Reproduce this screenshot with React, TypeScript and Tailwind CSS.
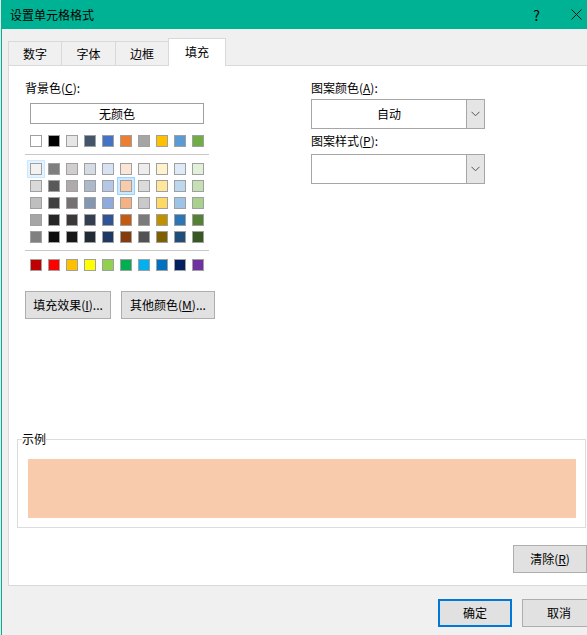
const themeRow = ["#FFFFFF", "#000000", "#E7E6E6", "#44546A", "#4472C4", "#ED7D31", "#A5A5A5", "#FFC000", "#5B9BD5", "#70AD47"];

const shadeRows = [
  ["#F2F2F2", "#7F7F7F", "#D0CECE", "#D6DCE4", "#D9E2F3", "#FBE5D6", "#EDEDED", "#FFF2CC", "#DEEBF7", "#E2F0D9"],
  ["#D9D9D9", "#595959", "#AEAAAA", "#ADB9CA", "#B4C7E7", "#F8CBAD", "#DBDBDB", "#FFE699", "#BDD7EE", "#C5E0B4"],
  ["#BFBFBF", "#404040", "#757171", "#8497B0", "#8FAADC", "#F4B183", "#C9C9C9", "#FFD966", "#9DC3E6", "#A9D18E"],
  ["#A6A6A6", "#262626", "#3B3838", "#333F50", "#2F5597", "#C55A11", "#7B7B7B", "#BF9000", "#2E75B6", "#548235"],
  ["#808080", "#0D0D0D", "#181717", "#222A35", "#203864", "#843C0C", "#525252", "#7F6000", "#1F4E79", "#385723"],
];

const standardRow = ["#C00000", "#FF0000", "#FFC000", "#FFFF00", "#92D050", "#00B050", "#00B0F0", "#0070C0", "#002060", "#7030A0"];

const tabs = [
  { label: "数字", w: "w-[54px]" },
  { label: "字体", w: "w-[55px]" },
  { label: "边框", w: "w-[54px]" },
];

function Swatch({ color, mark }: { color: string; mark?: "hover" | "selected" }) {
  return (
    <div className="relative h-[12px] w-[12px]">
      {mark === "hover" && <div className="absolute -inset-[3px] border border-[#cce8ff] bg-[#e5f3ff]" />}
      {mark === "selected" && <div className="absolute -inset-[3px] border border-[#99d1ff] bg-[#cce8ff]" />}
      <div className="relative h-full w-full border border-[#a0a0a0]" style={{ backgroundColor: color }} />
    </div>
  );
}

function SwatchRow({ colors, row }: { colors: string[]; row?: number }) {
  return (
    <div className="flex gap-[6px]">
      {colors.map((c, i) => (
        <Swatch
          key={i}
          color={c}
          mark={row === 0 && i === 0 ? "hover" : row === 1 && i === 5 ? "selected" : undefined}
        />
      ))}
    </div>
  );
}

function Chevron() {
  return (
    <svg width="9" height="6" viewBox="0 0 9 6" fill="none" stroke="#555" strokeWidth="1">
      <path d="M0.5 0.8L4.5 4.8L8.5 0.8" />
    </svg>
  );
}

function Combo({ value }: { value?: string }) {
  return (
    <div className="flex h-[30px] w-[174px] border border-[#a6a6a6] bg-white">
      <div className="flex flex-1 items-center justify-center">{value}</div>
      <div className="flex w-[18px] items-center justify-center border-l border-[#a6a6a6] bg-[#e5e5e5]">
        <Chevron />
      </div>
    </div>
  );
}

function Btn({ children, w, primary }: { children: React.ReactNode; w: string; primary?: boolean }) {
  return (
    <div
      className={`flex h-[28px] ${w} items-center justify-center bg-[#e1e1e1] ${
        primary ? "border-2 border-[#0078d7]" : "border border-[#adadad]"
      }`}
    >
      {children}
    </div>
  );
}

export default function App() {
  return (
    <div className="flex h-[635px] w-[587px] overflow-hidden bg-[#eeeeee] font-['Noto_Sans_CJK_SC',sans-serif] text-[12px] leading-[16px] text-black">
      <div className="w-px shrink-0 bg-[#e6e6e6]" />
      <div className="flex min-w-0 flex-1 flex-col border-l border-[#00b294] bg-[#f0f0f0]">
        {/* title bar */}
        <div className="flex h-[29px] shrink-0 items-center bg-[#00b294] pl-[8px] pr-[5px]">
          <span>设置单元格格式</span>
          <span className="ml-auto text-[14px]">?</span>
          <svg className="ml-[31px]" width="11" height="11" viewBox="0 0 11 11" stroke="#111" strokeWidth="1">
            <path d="M0.5 0.5L10.5 10.5M10.5 0.5L0.5 10.5" />
          </svg>
        </div>

        {/* tabs */}
        <div className="relative z-10 mt-[9px] -mb-px flex items-end pl-[6px]">
          {tabs.map((t, i) => (
            <div
              key={t.label}
              className={`mb-px flex h-[24px] ${t.w} items-center justify-center border border-b-0 border-[#d9d9d9] bg-[#f0f0f0] ${
                i > 0 ? "-ml-px" : ""
              }`}
            >
              {t.label}
            </div>
          ))}
          <div className="-ml-px flex h-[28px] w-[58px] items-center justify-center border border-b-0 border-[#d9d9d9] bg-white pb-[2px]">
            填充
          </div>
        </div>

        {/* panel */}
        <div className="ml-[6px] flex h-[521px] w-[592px] shrink-0 flex-col border border-[#d9d9d9] bg-white pb-[12px]">
          <div className="flex pt-[14px]">
            <div className="flex w-[302px] flex-col pl-[16px]">
              <div>
                背景色(<span className="underline">C</span>):
              </div>
              <div className="ml-[5px] mt-[7px] flex h-[21px] w-[174px] items-center justify-center border border-[#a0a0a0]">
                无颜色
              </div>
              <div className="ml-[5px] mt-[11px]">
                <SwatchRow colors={themeRow} />
              </div>
              <div className="mt-[7px] h-px w-[184px] bg-[#c8c8c8]" />
              <div className="ml-[5px] mt-[8px] flex flex-col gap-[5px]">
                {shadeRows.map((r, i) => (
                  <SwatchRow key={i} colors={r} row={i} />
                ))}
              </div>
              <div className="mt-[7px] h-px w-[184px] bg-[#c8c8c8]" />
              <div className="ml-[5px] mt-[8px]">
                <SwatchRow colors={standardRow} />
              </div>
              <div className="mt-[20px] flex gap-[10px]">
                <Btn w="w-[86px]">
                  填充效果(<span className="underline">I</span>)...
                </Btn>
                <Btn w="w-[94px]">
                  其他颜色(<span className="underline">M</span>)...
                </Btn>
              </div>
            </div>

            <div className="flex flex-col">
              <div>
                图案颜色(<span className="underline">A</span>):
              </div>
              <div className="mt-[3px]">
                <Combo value="自动" />
              </div>
              <div className="mt-[4px]">
                图案样式(<span className="underline">P</span>):
              </div>
              <div className="mt-[5px]">
                <Combo />
              </div>
            </div>
          </div>

          <div className="flex-1" />

          {/* sample */}
          <div className="relative ml-[8px] mr-[13px] border border-[#dcdcdc] pb-[9px] pl-[10px] pr-[9px] pt-[19px]">
            <span className="absolute left-[4px] top-[-9px] bg-white">示例</span>
            <div className="h-[59px] bg-[#f8cbad]" />
          </div>

          <div className="mt-[17px] flex justify-end pr-[12px]">
            <Btn w="w-[74px]">
              清除(<span className="underline">R</span>)
            </Btn>
          </div>
        </div>

        {/* footer buttons */}
        <div className="mt-[13px] flex gap-[10px] pl-[436px]">
          <Btn w="w-[74px] shrink-0" primary>
            确定
          </Btn>
          <Btn w="w-[74px] shrink-0">取消</Btn>
        </div>
      </div>
    </div>
  );
}
